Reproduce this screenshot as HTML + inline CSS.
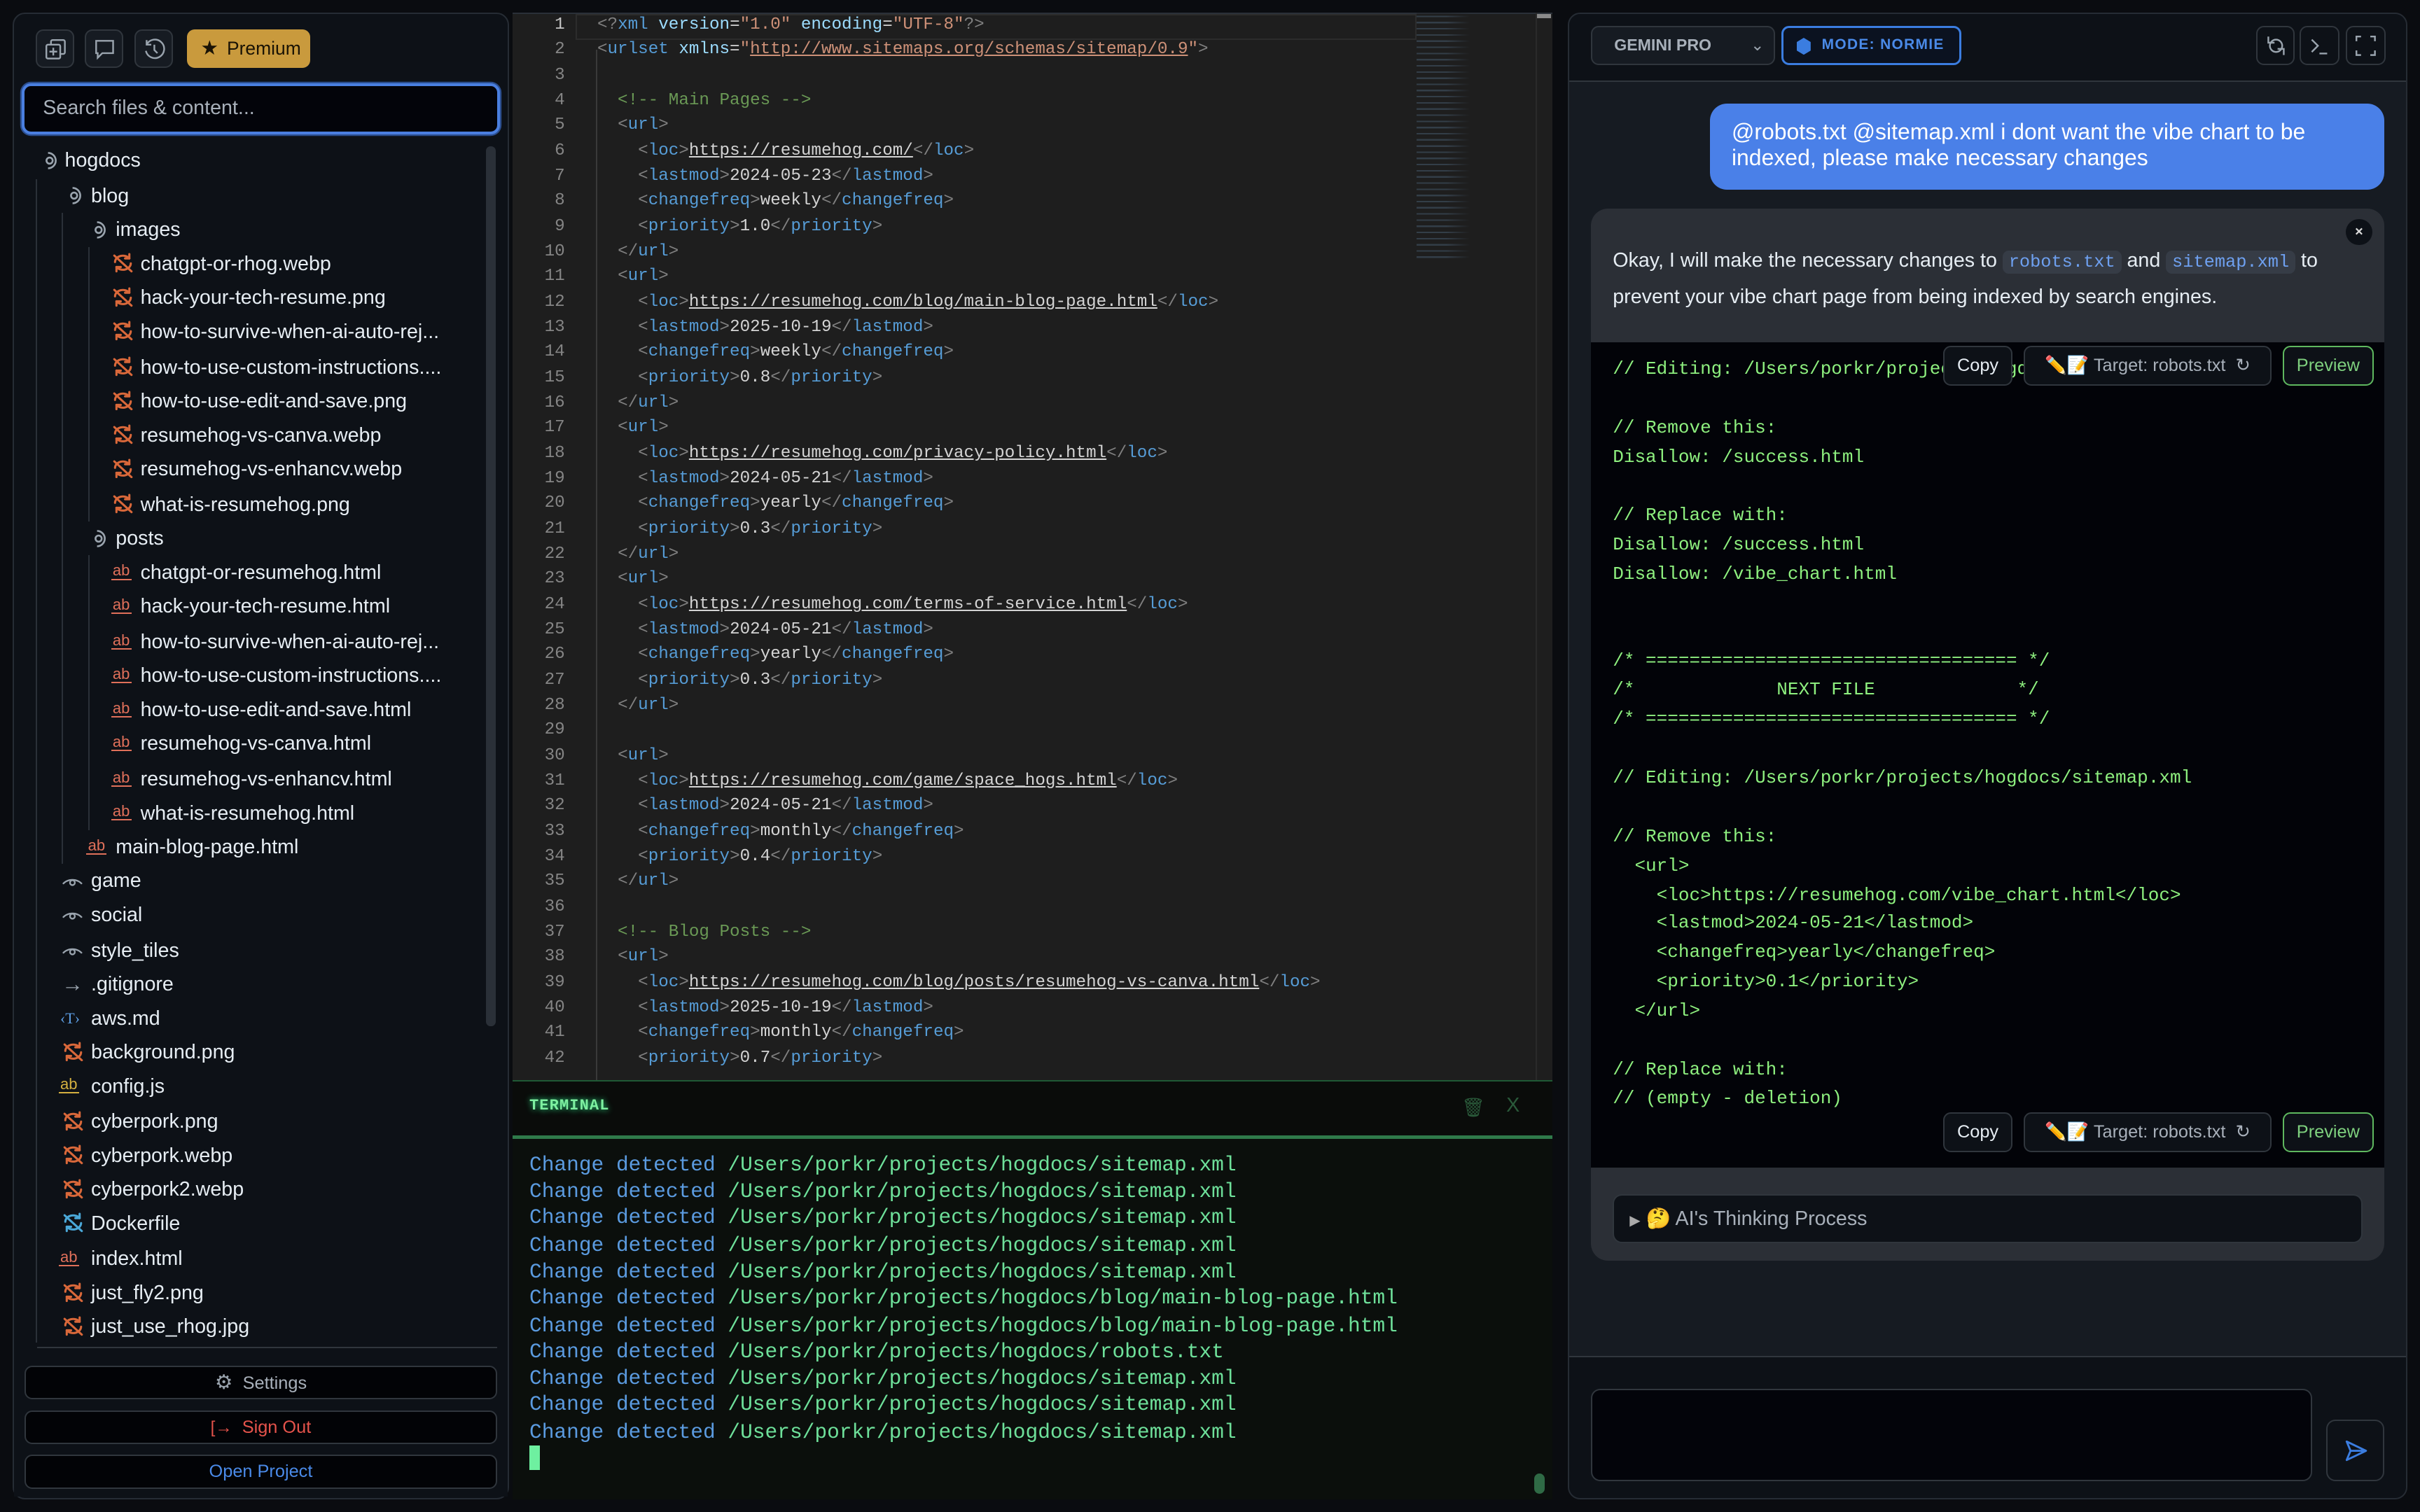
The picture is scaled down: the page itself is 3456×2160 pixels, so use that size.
<!DOCTYPE html>
<html><head><meta charset="utf-8"><style>
*{box-sizing:border-box;margin:0;padding:0}
html,body{width:3456px;height:2160px;background:#0a0c10;overflow:hidden}
#r{position:absolute;left:0;top:0;width:1568px;height:980px;zoom:2.20408;font-family:"Liberation Sans",sans-serif;color:#e6edf3}
.a{position:absolute}
.mono{font-family:"Liberation Mono",monospace}
.btn{position:absolute;border:1px solid #30363d;border-radius:5px;background:#161b22}
.row{position:absolute;height:20px;line-height:20px;font-size:13px;color:#e6edf3;white-space:nowrap}
.ic{position:absolute;top:3px;color:#d9683a}
.ab{position:absolute;font-size:10px;line-height:10px;top:4px;border-bottom:1.3px solid;padding:0 1px}
.cl{position:absolute;left:387px;font-size:11px;line-height:16px;white-space:pre;color:#d4d4d4}
.ln{position:absolute;width:30px;text-align:right;left:336px;font-size:11px;line-height:16px;color:#858585}
.t{color:#569cd6}.b{color:#808080}.s{color:#ce9178}.c{color:#6a9955}.at{color:#9cdcfe}
.tl{position:absolute;left:343px;font-size:13.4px;line-height:17px;white-space:pre;color:#6ee09a}
.tl span{color:#5b9be0}
.cc{position:absolute;left:1045px;font-size:11.8px;line-height:19px;white-space:pre;color:#8ef07f}
.sb{position:absolute;height:26px;border:1px solid #30363d;border-radius:5px;background:#0d1117;font-size:11.5px;line-height:24px;text-align:center}
</style></head><body><div id="r">
<svg width="0" height="0" style="position:absolute"><defs>
<symbol id="img" viewBox="0 0 16 14"><g fill="none" stroke="currentColor" stroke-width="1.5" stroke-linecap="round" stroke-linejoin="round"><path d="M2.5 6.5a5.5 4.5 0 0 1 10-2.5"/><path d="M12.5 1v3h-3"/><path d="M13.5 7.5a5.5 4.5 0 0 1-10 2.5"/><path d="M3.5 13v-3h3"/><path d="M2 2l12 11"/></g></symbol>
<symbol id="fo" viewBox="0 0 10 14"><g fill="none" stroke="#9aa4ae" stroke-width="1.2"><path d="M3 2a5 5 0 0 1 0 10"/><circle cx="4" cy="7" r="2"/></g></symbol>
<symbol id="eye" viewBox="0 0 16 10"><g fill="none" stroke="#9aa4ae" stroke-width="1.2"><path d="M1 7a8 6 0 0 1 14 0"/><circle cx="8" cy="6" r="1.8"/></g></symbol>
</defs></svg>

<!-- LEFT PANEL -->
<div class="a" style="left:8px;top:8px;width:322px;height:964px;border:1px solid #262c34;border-radius:8px;background:#0d1117"></div>
<div class="btn" style="left:23px;top:19px;width:25px;height:25px"><svg class="a" style="left:5px;top:5px" width="14" height="14" viewBox="0 0 14 14" fill="none" stroke="#9aa4ae" stroke-width="1.1"><rect x="4" y="1" width="9" height="9" rx="1"/><rect x="1" y="4" width="9" height="9" rx="1" fill="#161b22"/><path d="M5.5 6v5M3 8.5h5"/></svg></div>
<div class="btn" style="left:55px;top:19px;width:25px;height:25px"><svg class="a" style="left:5px;top:5px" width="14" height="14" viewBox="0 0 14 14" fill="none" stroke="#9aa4ae" stroke-width="1.1"><path d="M1.5 1.5h11v8h-7l-3 3v-3h-1z"/></svg></div>
<div class="btn" style="left:87px;top:19px;width:25px;height:25px"><svg class="a" style="left:5px;top:5px" width="14" height="14" viewBox="0 0 14 14" fill="none" stroke="#9aa4ae" stroke-width="1.1"><path d="M2 4a6 6 0 1 1-0.5 4"/><path d="M2 1v3h3"/><path d="M7 4v3.5l2 2"/></svg></div>
<div class="a" style="left:121px;top:19px;width:80px;height:25px;background:#c99a3d;border-radius:5px;font-size:12px;line-height:25px;color:#1a1305"><span style="position:absolute;left:9px;font-size:13px">★</span><span style="position:absolute;left:26px">Premium</span></div>
<div class="a" style="left:14px;top:54px;width:310px;height:33px;border:2px solid #4a7fe0;border-radius:6px;background:#03040a;box-shadow:0 0 0 1px #2c4f8f;font-size:13px;line-height:29px;padding-left:12px;color:#a8b0ba">Search files &amp; content...</div>
<div class="a" style="left:315px;top:95px;width:6px;height:570px;background:#2a3038;border-radius:3px"></div>
<div class="a" style="left:23px;top:116px;width:1px;height:754px;background:#2a3038"></div>
<div class="a" style="left:40px;top:138px;width:1px;height:422px;background:#2a3038"></div>
<div class="a" style="left:57px;top:160px;width:1px;height:178px;background:#2a3038"></div>
<div class="a" style="left:57px;top:360px;width:1px;height:178px;background:#2a3038"></div>

<div class="row" style="top:94px;left:28px"><svg width="10" height="14" style="position:absolute;top:3px"><use href="#fo"/></svg><span style="position:absolute;left:14px">hogdocs</span></div>
<div class="row" style="top:117px;left:44px"><svg width="10" height="14" style="position:absolute;top:3px"><use href="#fo"/></svg><span style="position:absolute;left:15px">blog</span></div>
<div class="row" style="top:139px;left:60px"><svg width="10" height="14" style="position:absolute;top:3px"><use href="#fo"/></svg><span style="position:absolute;left:15px">images</span></div>

<div class="row" style="top:161px;left:72px"><svg class="ic" width="15" height="13"><use href="#img"/></svg><span style="position:absolute;left:19px">chatgpt-or-rhog.webp</span></div>
<div class="row" style="top:183px;left:72px"><svg class="ic" width="15" height="13"><use href="#img"/></svg><span style="position:absolute;left:19px">hack-your-tech-resume.png</span></div>
<div class="row" style="top:205px;left:72px"><svg class="ic" width="15" height="13"><use href="#img"/></svg><span style="position:absolute;left:19px">how-to-survive-when-ai-auto-rej...</span></div>
<div class="row" style="top:228px;left:72px"><svg class="ic" width="15" height="13"><use href="#img"/></svg><span style="position:absolute;left:19px">how-to-use-custom-instructions....</span></div>
<div class="row" style="top:250px;left:72px"><svg class="ic" width="15" height="13"><use href="#img"/></svg><span style="position:absolute;left:19px">how-to-use-edit-and-save.png</span></div>
<div class="row" style="top:272px;left:72px"><svg class="ic" width="15" height="13"><use href="#img"/></svg><span style="position:absolute;left:19px">resumehog-vs-canva.webp</span></div>
<div class="row" style="top:294px;left:72px"><svg class="ic" width="15" height="13"><use href="#img"/></svg><span style="position:absolute;left:19px">resumehog-vs-enhancv.webp</span></div>
<div class="row" style="top:317px;left:72px"><svg class="ic" width="15" height="13"><use href="#img"/></svg><span style="position:absolute;left:19px">what-is-resumehog.png</span></div>
<div class="row" style="top:339px;left:60px"><svg width="10" height="14" style="position:absolute;top:3px"><use href="#fo"/></svg><span style="position:absolute;left:15px">posts</span></div>
<div class="row" style="top:361px;left:72px"><span class="ab" style="color:#e0705a">ab</span><span style="position:absolute;left:19px">chatgpt-or-resumehog.html</span></div>
<div class="row" style="top:383px;left:72px"><span class="ab" style="color:#e0705a">ab</span><span style="position:absolute;left:19px">hack-your-tech-resume.html</span></div>
<div class="row" style="top:406px;left:72px"><span class="ab" style="color:#e0705a">ab</span><span style="position:absolute;left:19px">how-to-survive-when-ai-auto-rej...</span></div>
<div class="row" style="top:428px;left:72px"><span class="ab" style="color:#e0705a">ab</span><span style="position:absolute;left:19px">how-to-use-custom-instructions....</span></div>
<div class="row" style="top:450px;left:72px"><span class="ab" style="color:#e0705a">ab</span><span style="position:absolute;left:19px">how-to-use-edit-and-save.html</span></div>
<div class="row" style="top:472px;left:72px"><span class="ab" style="color:#e0705a">ab</span><span style="position:absolute;left:19px">resumehog-vs-canva.html</span></div>
<div class="row" style="top:495px;left:72px"><span class="ab" style="color:#e0705a">ab</span><span style="position:absolute;left:19px">resumehog-vs-enhancv.html</span></div>
<div class="row" style="top:517px;left:72px"><span class="ab" style="color:#e0705a">ab</span><span style="position:absolute;left:19px">what-is-resumehog.html</span></div>
<div class="row" style="top:539px;left:56px"><span class="ab" style="color:#e0705a">ab</span><span style="position:absolute;left:19px">main-blog-page.html</span></div>
<div class="row" style="top:561px;left:40px"><svg class="a" width="14" height="10" style="top:5px"><use href="#eye"/></svg><span style="position:absolute;left:19px">game</span></div>
<div class="row" style="top:583px;left:40px"><svg class="a" width="14" height="10" style="top:5px"><use href="#eye"/></svg><span style="position:absolute;left:19px">social</span></div>
<div class="row" style="top:606px;left:40px"><svg class="a" width="14" height="10" style="top:5px"><use href="#eye"/></svg><span style="position:absolute;left:19px">style_tiles</span></div>
<div class="row" style="top:628px;left:40px"><span style="position:absolute;color:#9aa4ae;font-size:14px">→</span><span style="position:absolute;left:19px">.gitignore</span></div>
<div class="row" style="top:650px;left:39px"><span style="position:absolute;color:#5b9be0;font-size:10px;font-family:'Liberation Serif',serif">‹T›</span><span style="position:absolute;left:20px">aws.md</span></div>
<div class="row" style="top:672px;left:40px"><svg class="ic" width="15" height="13"><use href="#img"/></svg><span style="position:absolute;left:19px">background.png</span></div>
<div class="row" style="top:694px;left:38px"><span class="ab" style="color:#d4b040">ab</span><span style="position:absolute;left:21px">config.js</span></div>
<div class="row" style="top:717px;left:40px"><svg class="ic" width="15" height="13"><use href="#img"/></svg><span style="position:absolute;left:19px">cyberpork.png</span></div>
<div class="row" style="top:739px;left:40px"><svg class="ic" width="15" height="13"><use href="#img"/></svg><span style="position:absolute;left:19px">cyberpork.webp</span></div>
<div class="row" style="top:761px;left:40px"><svg class="ic" width="15" height="13"><use href="#img"/></svg><span style="position:absolute;left:19px">cyberpork2.webp</span></div>
<div class="row" style="top:783px;left:40px"><svg class="ic" width="15" height="13" style="color:#4aa8d8"><use href="#img"/></svg><span style="position:absolute;left:19px">Dockerfile</span></div>
<div class="row" style="top:806px;left:38px"><span class="ab" style="color:#e0705a">ab</span><span style="position:absolute;left:21px">index.html</span></div>
<div class="row" style="top:828px;left:40px"><svg class="ic" width="15" height="13"><use href="#img"/></svg><span style="position:absolute;left:19px">just_fly2.png</span></div>
<div class="row" style="top:850px;left:40px"><svg class="ic" width="15" height="13"><use href="#img"/></svg><span style="position:absolute;left:19px">just_use_rhog.jpg</span></div>
<div class="a" style="left:9px;top:870px;width:320px;height:100px;background:#0d1117"></div>
<div class="a" style="left:24px;top:873px;width:298px;height:1px;background:#30363d"></div>
<div class="a" style="left:16px;top:885px;width:306px;height:22px;border:1px solid #30363d;border-radius:5px;background:#020306;font-size:11.5px;line-height:20px;text-align:center;color:#a8b0ba"><span style="font-size:13px;color:#9aa4ae">⚙</span>&nbsp; Settings</div>
<div class="a" style="left:16px;top:914px;width:306px;height:22px;border:1px solid #30363d;border-radius:5px;background:#020306;font-size:11.5px;line-height:20px;text-align:center;color:#e5534b"><span style="font-size:11px">[→</span>&nbsp; Sign Out</div>
<div class="a" style="left:16px;top:943px;width:306px;height:22px;border:1px solid #30363d;border-radius:5px;background:#020306;font-size:11.5px;line-height:20px;text-align:center;color:#4a8ae8">Open Project</div>

<!-- EDITOR -->
<div class="a" style="left:332px;top:8px;width:674px;height:694px;background:#1e1e1e;border-top:1px solid #2a3038"></div>
<div class="a" style="left:373px;top:9px;width:545px;height:17px;border:1px solid #2c2c2c"></div>
<div class="a" style="left:918px;top:8px;width:77px;height:160px;opacity:.3;background:repeating-linear-gradient(#1e1e1e 0 2px,#6688aa 2px 3px,#1e1e1e 3px 4px);-webkit-mask:linear-gradient(90deg,#000 0 25%,transparent 45%)"></div>
<div class="a" style="left:995px;top:9px;width:10px;height:3px;background:#8a8a8a"></div>
<div class="a" style="left:995px;top:8px;width:1px;height:692px;background:#2a2a2a"></div>
<div class="a" style="left:386px;top:32px;width:1px;height:670px;background:#3a3a3a"></div>
<div class="mono">
<div class="ln" style="top:8px;color:#c6c6c6">1</div><div class="cl" style="top:8px"><span class="b">&lt;?</span><span class="t">xml</span> <span class="at">version</span>=<span class="s">"1.0"</span> <span class="at">encoding</span>=<span class="s">"UTF-8"</span><span class="b">?&gt;</span></div>
<div class="ln" style="top:24px">2</div><div class="cl" style="top:24px"><span class="b">&lt;</span><span class="t">urlset</span> <span class="at">xmlns</span>=<span class="s">"<u>http://www.sitemaps.org/schemas/sitemap/0.9</u>"</span><span class="b">&gt;</span></div>
<div class="ln" style="top:41px">3</div>
<div class="ln" style="top:57px">4</div><div class="cl" style="top:57px"><span class="c">  &lt;!-- Main Pages --&gt;</span></div>
<div class="ln" style="top:73px">5</div><div class="cl" style="top:73px">  <span class="b">&lt;</span><span class="t">url</span><span class="b">&gt;</span></div>
<div class="ln" style="top:90px">6</div><div class="cl" style="top:90px">    <span class="b">&lt;</span><span class="t">loc</span><span class="b">&gt;</span><u>https://resumehog.com/</u><span class="b">&lt;/</span><span class="t">loc</span><span class="b">&gt;</span></div>
<div class="ln" style="top:106px">7</div><div class="cl" style="top:106px">    <span class="b">&lt;</span><span class="t">lastmod</span><span class="b">&gt;</span>2024-05-23<span class="b">&lt;/</span><span class="t">lastmod</span><span class="b">&gt;</span></div>
<div class="ln" style="top:122px">8</div><div class="cl" style="top:122px">    <span class="b">&lt;</span><span class="t">changefreq</span><span class="b">&gt;</span>weekly<span class="b">&lt;/</span><span class="t">changefreq</span><span class="b">&gt;</span></div>
<div class="ln" style="top:139px">9</div><div class="cl" style="top:139px">    <span class="b">&lt;</span><span class="t">priority</span><span class="b">&gt;</span>1.0<span class="b">&lt;/</span><span class="t">priority</span><span class="b">&gt;</span></div>
<div class="ln" style="top:155px">10</div><div class="cl" style="top:155px">  <span class="b">&lt;/</span><span class="t">url</span><span class="b">&gt;</span></div>
<div class="ln" style="top:171px">11</div><div class="cl" style="top:171px">  <span class="b">&lt;</span><span class="t">url</span><span class="b">&gt;</span></div>
<div class="ln" style="top:188px">12</div><div class="cl" style="top:188px">    <span class="b">&lt;</span><span class="t">loc</span><span class="b">&gt;</span><u>https://resumehog.com/blog/main-blog-page.html</u><span class="b">&lt;/</span><span class="t">loc</span><span class="b">&gt;</span></div>
<div class="ln" style="top:204px">13</div><div class="cl" style="top:204px">    <span class="b">&lt;</span><span class="t">lastmod</span><span class="b">&gt;</span>2025-10-19<span class="b">&lt;/</span><span class="t">lastmod</span><span class="b">&gt;</span></div>
<div class="ln" style="top:220px">14</div><div class="cl" style="top:220px">    <span class="b">&lt;</span><span class="t">changefreq</span><span class="b">&gt;</span>weekly<span class="b">&lt;/</span><span class="t">changefreq</span><span class="b">&gt;</span></div>
<div class="ln" style="top:237px">15</div><div class="cl" style="top:237px">    <span class="b">&lt;</span><span class="t">priority</span><span class="b">&gt;</span>0.8<span class="b">&lt;/</span><span class="t">priority</span><span class="b">&gt;</span></div>
<div class="ln" style="top:253px">16</div><div class="cl" style="top:253px">  <span class="b">&lt;/</span><span class="t">url</span><span class="b">&gt;</span></div>
<div class="ln" style="top:269px">17</div><div class="cl" style="top:269px">  <span class="b">&lt;</span><span class="t">url</span><span class="b">&gt;</span></div>
<div class="ln" style="top:286px">18</div><div class="cl" style="top:286px">    <span class="b">&lt;</span><span class="t">loc</span><span class="b">&gt;</span><u>https://resumehog.com/privacy-policy.html</u><span class="b">&lt;/</span><span class="t">loc</span><span class="b">&gt;</span></div>
<div class="ln" style="top:302px">19</div><div class="cl" style="top:302px">    <span class="b">&lt;</span><span class="t">lastmod</span><span class="b">&gt;</span>2024-05-21<span class="b">&lt;/</span><span class="t">lastmod</span><span class="b">&gt;</span></div>
<div class="ln" style="top:318px">20</div><div class="cl" style="top:318px">    <span class="b">&lt;</span><span class="t">changefreq</span><span class="b">&gt;</span>yearly<span class="b">&lt;/</span><span class="t">changefreq</span><span class="b">&gt;</span></div>
<div class="ln" style="top:335px">21</div><div class="cl" style="top:335px">    <span class="b">&lt;</span><span class="t">priority</span><span class="b">&gt;</span>0.3<span class="b">&lt;/</span><span class="t">priority</span><span class="b">&gt;</span></div>
<div class="ln" style="top:351px">22</div><div class="cl" style="top:351px">  <span class="b">&lt;/</span><span class="t">url</span><span class="b">&gt;</span></div>
<div class="ln" style="top:367px">23</div><div class="cl" style="top:367px">  <span class="b">&lt;</span><span class="t">url</span><span class="b">&gt;</span></div>
<div class="ln" style="top:384px">24</div><div class="cl" style="top:384px">    <span class="b">&lt;</span><span class="t">loc</span><span class="b">&gt;</span><u>https://resumehog.com/terms-of-service.html</u><span class="b">&lt;/</span><span class="t">loc</span><span class="b">&gt;</span></div>
<div class="ln" style="top:400px">25</div><div class="cl" style="top:400px">    <span class="b">&lt;</span><span class="t">lastmod</span><span class="b">&gt;</span>2024-05-21<span class="b">&lt;/</span><span class="t">lastmod</span><span class="b">&gt;</span></div>
<div class="ln" style="top:416px">26</div><div class="cl" style="top:416px">    <span class="b">&lt;</span><span class="t">changefreq</span><span class="b">&gt;</span>yearly<span class="b">&lt;/</span><span class="t">changefreq</span><span class="b">&gt;</span></div>
<div class="ln" style="top:433px">27</div><div class="cl" style="top:433px">    <span class="b">&lt;</span><span class="t">priority</span><span class="b">&gt;</span>0.3<span class="b">&lt;/</span><span class="t">priority</span><span class="b">&gt;</span></div>
<div class="ln" style="top:449px">28</div><div class="cl" style="top:449px">  <span class="b">&lt;/</span><span class="t">url</span><span class="b">&gt;</span></div>
<div class="ln" style="top:465px">29</div>
<div class="ln" style="top:482px">30</div><div class="cl" style="top:482px">  <span class="b">&lt;</span><span class="t">url</span><span class="b">&gt;</span></div>
<div class="ln" style="top:498px">31</div><div class="cl" style="top:498px">    <span class="b">&lt;</span><span class="t">loc</span><span class="b">&gt;</span><u>https://resumehog.com/game/space_hogs.html</u><span class="b">&lt;/</span><span class="t">loc</span><span class="b">&gt;</span></div>
<div class="ln" style="top:514px">32</div><div class="cl" style="top:514px">    <span class="b">&lt;</span><span class="t">lastmod</span><span class="b">&gt;</span>2024-05-21<span class="b">&lt;/</span><span class="t">lastmod</span><span class="b">&gt;</span></div>
<div class="ln" style="top:531px">33</div><div class="cl" style="top:531px">    <span class="b">&lt;</span><span class="t">changefreq</span><span class="b">&gt;</span>monthly<span class="b">&lt;/</span><span class="t">changefreq</span><span class="b">&gt;</span></div>
<div class="ln" style="top:547px">34</div><div class="cl" style="top:547px">    <span class="b">&lt;</span><span class="t">priority</span><span class="b">&gt;</span>0.4<span class="b">&lt;/</span><span class="t">priority</span><span class="b">&gt;</span></div>
<div class="ln" style="top:563px">35</div><div class="cl" style="top:563px">  <span class="b">&lt;/</span><span class="t">url</span><span class="b">&gt;</span></div>
<div class="ln" style="top:580px">36</div>
<div class="ln" style="top:596px">37</div><div class="cl" style="top:596px"><span class="c">  &lt;!-- Blog Posts --&gt;</span></div>
<div class="ln" style="top:612px">38</div><div class="cl" style="top:612px">  <span class="b">&lt;</span><span class="t">url</span><span class="b">&gt;</span></div>
<div class="ln" style="top:629px">39</div><div class="cl" style="top:629px">    <span class="b">&lt;</span><span class="t">loc</span><span class="b">&gt;</span><u>https://resumehog.com/blog/posts/resumehog-vs-canva.html</u><span class="b">&lt;/</span><span class="t">loc</span><span class="b">&gt;</span></div>
<div class="ln" style="top:645px">40</div><div class="cl" style="top:645px">    <span class="b">&lt;</span><span class="t">lastmod</span><span class="b">&gt;</span>2025-10-19<span class="b">&lt;/</span><span class="t">lastmod</span><span class="b">&gt;</span></div>
<div class="ln" style="top:661px">41</div><div class="cl" style="top:661px">    <span class="b">&lt;</span><span class="t">changefreq</span><span class="b">&gt;</span>monthly<span class="b">&lt;/</span><span class="t">changefreq</span><span class="b">&gt;</span></div>
<div class="ln" style="top:678px">42</div><div class="cl" style="top:678px">    <span class="b">&lt;</span><span class="t">priority</span><span class="b">&gt;</span>0.7<span class="b">&lt;/</span><span class="t">priority</span><span class="b">&gt;</span></div>
</div>

<!-- TERMINAL -->
<div class="a" style="left:332px;top:700px;width:674px;height:272px;background:#0b0f0c;border-top:1px solid #1f5a35"></div>
<div class="a" style="left:332px;top:701px;width:674px;height:35px;background:#0a0c0a"></div>
<div class="a" style="left:332px;top:736px;width:674px;height:2px;background:#2f7a4a"></div>
<div class="a mono" style="left:343px;top:711px;font-size:10px;font-weight:bold;letter-spacing:0.5px;color:#7ef0a0;text-shadow:0 0 4px #3f9">TERMINAL</div>
<div class="a" style="left:947px;top:711px;font-size:12px;color:#2a5a3a">🗑</div>
<div class="a" style="left:976px;top:709px;font-size:13px;color:#2a5a3a">X</div>
<div class="mono">
<div class="tl" style="top:747px"><span>Change detected</span> /Users/porkr/projects/hogdocs/sitemap.xml</div>
<div class="tl" style="top:764px"><span>Change detected</span> /Users/porkr/projects/hogdocs/sitemap.xml</div>
<div class="tl" style="top:781px"><span>Change detected</span> /Users/porkr/projects/hogdocs/sitemap.xml</div>
<div class="tl" style="top:799px"><span>Change detected</span> /Users/porkr/projects/hogdocs/sitemap.xml</div>
<div class="tl" style="top:816px"><span>Change detected</span> /Users/porkr/projects/hogdocs/sitemap.xml</div>
<div class="tl" style="top:833px"><span>Change detected</span> /Users/porkr/projects/hogdocs/blog/main-blog-page.html</div>
<div class="tl" style="top:851px"><span>Change detected</span> /Users/porkr/projects/hogdocs/blog/main-blog-page.html</div>
<div class="tl" style="top:868px"><span>Change detected</span> /Users/porkr/projects/hogdocs/robots.txt</div>
<div class="tl" style="top:885px"><span>Change detected</span> /Users/porkr/projects/hogdocs/sitemap.xml</div>
<div class="tl" style="top:902px"><span>Change detected</span> /Users/porkr/projects/hogdocs/sitemap.xml</div>
<div class="tl" style="top:920px"><span>Change detected</span> /Users/porkr/projects/hogdocs/sitemap.xml</div>
</div>
<div class="a" style="left:343px;top:937px;width:7px;height:16px;background:#6ef0a0"></div>
<div class="a" style="left:994px;top:955px;width:7px;height:13px;background:#2f6a45;border-radius:4px"></div>

<!-- RIGHT PANEL -->
<div class="a" style="left:1016px;top:8px;width:544px;height:964px;border:1px solid #262c34;border-radius:8px;background:#161b22;overflow:hidden">
 <div class="a" style="left:0;top:0;width:544px;height:44px;background:#0d1117;border-bottom:1px solid #30363d"></div>
 <div class="a" style="left:0;top:870px;width:544px;height:94px;background:#0d1117;border-top:1px solid #30363d"></div>
</div>
<div class="a" style="left:1031px;top:17px;width:119px;height:25px;border:1px solid #30363d;border-radius:5px;background:#161b22;font-size:10.5px;font-weight:bold;line-height:23px;padding-left:14px;color:#a8b0ba">GEMINI PRO<span style="position:absolute;right:6px;font-weight:normal;color:#9aa4ae">⌄</span></div>
<div class="a" style="left:1154px;top:17px;width:117px;height:25px;border:1.5px solid #3b7de0;border-radius:5px;background:#0b1220;font-size:9.5px;font-weight:bold;letter-spacing:.6px;line-height:22px;color:#4a8ae8;padding-left:25px"><svg class="a" style="left:9px;top:6px" width="9" height="11" viewBox="0 0 9 11"><path d="M4.5 0L9 2.7v5.6L4.5 11 0 8.3V2.7z" fill="#3b7de0"/></svg>MODE: NORMIE</div>
<div class="btn" style="left:1462px;top:17px;width:25px;height:25px;background:#0d1117"><svg class="a" style="left:5px;top:5px" width="14" height="14" viewBox="0 0 14 14" fill="none" stroke="#9aa4ae" stroke-width="1.1"><circle cx="7" cy="7" r="4"/><path d="M2 1v4h4M12 13V9H8"/></svg></div>
<div class="btn" style="left:1490px;top:17px;width:26px;height:25px;background:#0d1117"><svg class="a" style="left:5px;top:5px" width="14" height="14" viewBox="0 0 14 14" fill="none" stroke="#9aa4ae" stroke-width="1.1"><path d="M2 3l4 4-4 4M7 12h5"/></svg></div>
<div class="btn" style="left:1520px;top:17px;width:26px;height:25px;background:#0d1117"><svg class="a" style="left:5px;top:5px" width="14" height="14" viewBox="0 0 14 14" fill="none" stroke="#9aa4ae" stroke-width="1.1"><path d="M1 4V1h3M10 1h3v3M13 10v3h-3M4 13H1v-3"/></svg></div>

<div class="a" style="left:1108px;top:67px;width:437px;height:56px;background:#4a80e8;border-radius:11px;padding:10px 14px;font-size:14.5px;line-height:17px;color:#fff">@robots.txt @sitemap.xml i dont want the vibe chart to be indexed, please make necessary changes</div>

<div class="a" style="left:1031px;top:135px;width:514px;height:682px;background:#2b2f36;border-radius:11px;overflow:hidden">
 <div class="a" style="left:0;top:87px;width:514px;height:535px;background:#020308"></div>
</div>
<div class="a" style="left:1520px;top:142px;width:17px;height:17px;border-radius:50%;background:#0d1117;color:#ddd;font-size:9px;line-height:17px;text-align:center;font-weight:bold">×</div>
<div class="a" style="left:1045px;top:158px;width:490px;font-size:13px;line-height:22px;color:#e6edf3">Okay, I will make the necessary changes to <span class="mono" style="background:#363c46;color:#6ea0f0;border-radius:4px;padding:1px 4px;font-size:11.5px">robots.txt</span> and <span class="mono" style="background:#363c46;color:#6ea0f0;border-radius:4px;padding:1px 4px;font-size:11.5px">sitemap.xml</span> to prevent your vibe chart page from being indexed by search engines.</div>

<div class="mono">
<div class="cc" style="top:230px">// Editing: /Users/porkr/projects/hogdocs/robots.txt</div>
<div class="cc" style="top:268px">// Remove this:</div>
<div class="cc" style="top:287px">Disallow: /success.html</div>
<div class="cc" style="top:325px">// Replace with:</div>
<div class="cc" style="top:344px">Disallow: /success.html</div>
<div class="cc" style="top:363px">Disallow: /vibe_chart.html</div>
<div class="cc" style="top:419px">/* ================================== */</div>
<div class="cc" style="top:438px">/*             NEXT FILE             */</div>
<div class="cc" style="top:457px">/* ================================== */</div>
<div class="cc" style="top:495px">// Editing: /Users/porkr/projects/hogdocs/sitemap.xml</div>
<div class="cc" style="top:533px">// Remove this:</div>
<div class="cc" style="top:552px">  &lt;url&gt;</div>
<div class="cc" style="top:571px">    &lt;loc&gt;https://resumehog.com/vibe_chart.html&lt;/loc&gt;</div>
<div class="cc" style="top:589px">    &lt;lastmod&gt;2024-05-21&lt;/lastmod&gt;</div>
<div class="cc" style="top:608px">    &lt;changefreq&gt;yearly&lt;/changefreq&gt;</div>
<div class="cc" style="top:627px">    &lt;priority&gt;0.1&lt;/priority&gt;</div>
<div class="cc" style="top:646px">  &lt;/url&gt;</div>
<div class="cc" style="top:684px">// Replace with:</div>
<div class="cc" style="top:703px">// (empty - deletion)</div>
</div>
<div class="sb" style="left:1259px;top:224px;width:45px;color:#e6edf3">Copy</div>
<div class="sb" style="left:1311px;top:224px;width:161px;color:#a8b0ba">✏️📝 Target: robots.txt &nbsp;↻</div>
<div class="sb" style="left:1479px;top:224px;width:59px;color:#7ed07e;border-color:#5fb85f">Preview</div>
<div class="sb" style="left:1259px;top:721px;width:45px;color:#e6edf3">Copy</div>
<div class="sb" style="left:1311px;top:721px;width:161px;color:#a8b0ba">✏️📝 Target: robots.txt &nbsp;↻</div>
<div class="sb" style="left:1479px;top:721px;width:59px;color:#7ed07e;border-color:#5fb85f">Preview</div>

<div class="a" style="left:1045px;top:774px;width:486px;height:32px;background:#0d1117;border:1px solid #30363d;border-radius:6px;font-size:13px;line-height:30px;padding-left:10px;color:#a8b0ba"><span style="font-size:9px;color:#aaa">▶</span> 🤔 AI's Thinking Process</div>

<div class="a" style="left:1031px;top:900px;width:467px;height:60px;background:#03040a;border:1px solid #30363d;border-radius:6px"></div>
<div class="a" style="left:1507px;top:920px;width:38px;height:40px;background:#0d1117;border:1px solid #30363d;border-radius:6px"><svg class="a" style="left:11px;top:12px" width="15" height="15" viewBox="0 0 15 15" fill="none" stroke="#3b7de0" stroke-width="1.3" stroke-linejoin="round"><path d="M1.5 1.5L14 7.5 1.5 13.5 4 7.5z M4 7.5h10"/></svg></div>
</div></body></html>
